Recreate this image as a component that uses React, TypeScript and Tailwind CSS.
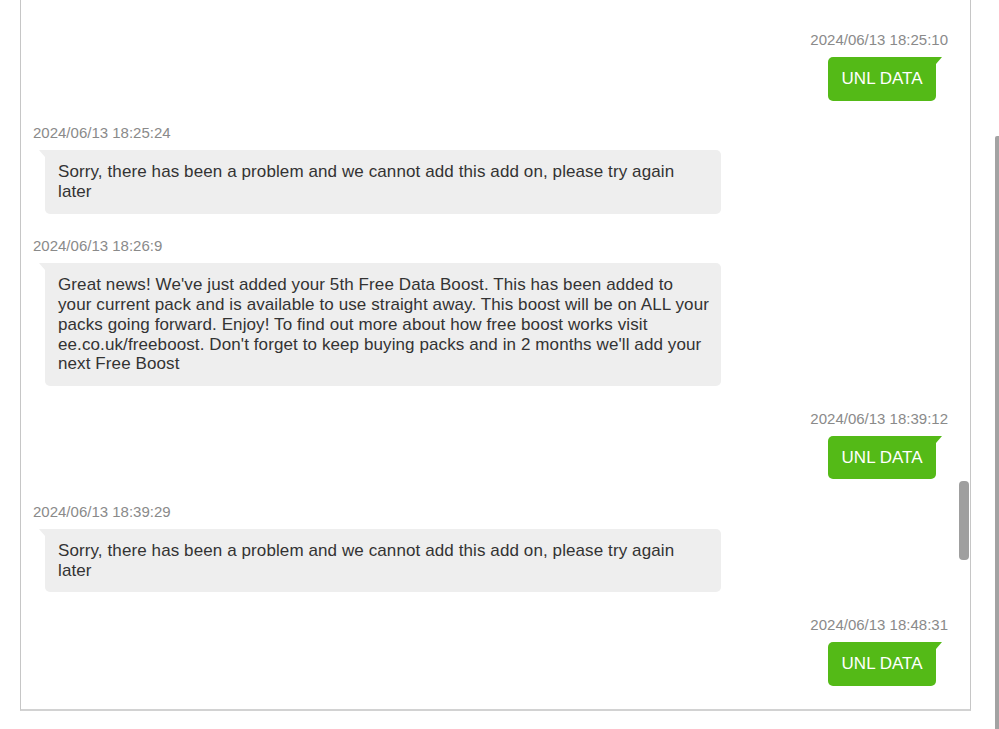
import type { ReactNode } from "react";

type Msg = {
  time: string;
  lines: string[];
  mine: boolean;
};

const sorry = [
  "Sorry, there has been a problem and we cannot add this add on, please try again",
  "later",
];

const messages: Msg[] = [
  { time: "2024/06/13 18:25:10", lines: ["UNL DATA"], mine: true },
  { time: "2024/06/13 18:25:24", lines: sorry, mine: false },
  {
    time: "2024/06/13 18:26:9",
    lines: [
      "Great news! We've just added your 5th Free Data Boost. This has been added to",
      "your current pack and is available to use straight away. This boost will be on ALL your",
      "packs going forward. Enjoy! To find out more about how free boost works visit",
      "ee.co.uk/freeboost. Don't forget to keep buying packs and in 2 months we'll add your",
      "next Free Boost",
    ],
    mine: false,
  },
  { time: "2024/06/13 18:39:12", lines: ["UNL DATA"], mine: true },
  { time: "2024/06/13 18:39:29", lines: sorry, mine: false },
  { time: "2024/06/13 18:48:31", lines: ["UNL DATA"], mine: true },
];

function Timestamp({ children, mine }: { children: ReactNode; mine: boolean }) {
  return (
    <p className={`text-[15px] leading-[18px] text-[#8a8a8a] ${mine ? "text-right" : "text-left"}`}>
      {children}
    </p>
  );
}

function SentBubble({ text }: { text: string }) {
  return (
    <div className="relative mr-[12px] rounded-[5px] rounded-tr-none bg-[#54ba17] px-[13.5px] py-3 text-[17px] leading-[19.75px] text-white">
      {text}
      <svg className="absolute -right-[6px] top-0" width="6" height="7" viewBox="0 0 6 7">
        <polygon points="0,0 6,0 0,7" fill="#54ba17" />
      </svg>
    </div>
  );
}

function ReceivedBubble({ lines }: { lines: string[] }) {
  return (
    <div className="relative ml-[12px] w-[676px] rounded-[5px] rounded-tl-none bg-[#eeeeee] px-[13px] py-3 text-[17px] leading-[19.75px] tracking-[0.1px] text-[#333333]">
      {lines.map((l, i) => (
        <span key={i} className="block whitespace-nowrap">
          {l}
        </span>
      ))}
      <svg className="absolute -left-[6px] top-0" width="6" height="7" viewBox="0 0 6 7">
        <polygon points="6,0 0,0 6,7" fill="#eeeeee" />
      </svg>
    </div>
  );
}

function MessageBlock({ msg, first }: { msg: Msg; first: boolean }) {
  return (
    <div className={`flex flex-col ${msg.mine ? "items-end" : "items-start"} ${first ? "" : "mt-[23.5px]"}`}>
      <Timestamp mine={msg.mine}>{msg.time}</Timestamp>
      <div className="h-[8px]" />
      {msg.mine ? <SentBubble text={msg.lines[0]} /> : <ReceivedBubble lines={msg.lines} />}
    </div>
  );
}

export default function App() {
  return (
    <div className="relative h-[729px] w-[999px] overflow-hidden bg-white font-['Liberation_Sans',Arial,sans-serif]">
      <div className="ml-[20px] h-[711px] w-[951px] border-x border-b-2 border-x-[#c6c6c6] border-b-[#d2d2d2] pl-[12px] pr-[22px] pt-[31px]">
        {messages.map((m, i) => (
          <MessageBlock key={i} msg={m} first={i === 0} />
        ))}
      </div>

      {/* inner scroll thumb */}
      <div className="absolute left-[959px] top-[481px] h-[79px] w-[10px] rounded-[4px] bg-[#9f9f9f]" />
      {/* page scrollbar edge */}
      <div className="absolute left-[995px] top-[136px] h-[593px] w-[4px] rounded-tl-[2px] bg-[#a3a3a3]" />
    </div>
  );
}
